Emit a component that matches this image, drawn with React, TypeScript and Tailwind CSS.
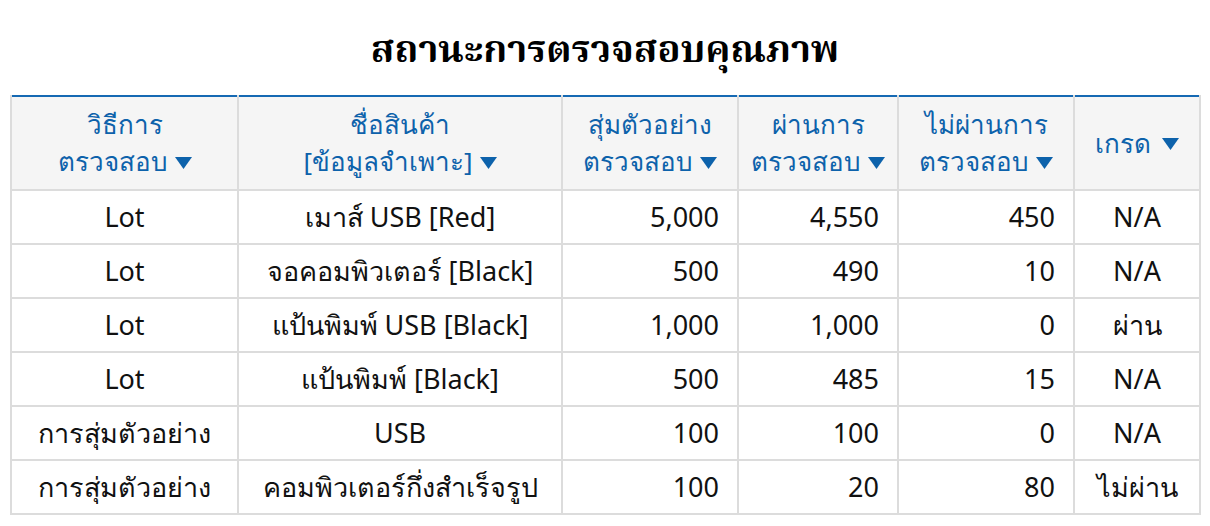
import { ReactNode } from 'react';

type Row = {
    method: string;
    product: string;
    sampled: string;
    passed: string;
    failed: string;
    grade: string;
};

const rows: Row[] = [
    { method: 'Lot', product: 'เมาส์ USB [Red]', sampled: '5,000', passed: '4,550', failed: '450', grade: 'N/A' },
    { method: 'Lot', product: 'จอคอมพิวเตอร์ [Black]', sampled: '500', passed: '490', failed: '10', grade: 'N/A' },
    { method: 'Lot', product: 'แป้นพิมพ์ USB [Black]', sampled: '1,000', passed: '1,000', failed: '0', grade: 'ผ่าน' },
    { method: 'Lot', product: 'แป้นพิมพ์ [Black]', sampled: '500', passed: '485', failed: '15', grade: 'N/A' },
    { method: 'การสุ่มตัวอย่าง', product: 'USB', sampled: '100', passed: '100', failed: '0', grade: 'N/A' },
    { method: 'การสุ่มตัวอย่าง', product: 'คอมพิวเตอร์กึ่งสำเร็จรูป', sampled: '100', passed: '20', failed: '80', grade: 'ไม่ผ่าน' },
];

// small sort arrow used in every header cell
const SortArrow = () => (
    <svg width="17" height="12" viewBox="0 0 17 12" className="inline-block ml-[7px] mb-[3px]">
        <path d="M0 0 H17 L8.5 12 Z" fill="#0d62ab" />
    </svg>
);

const HeadCell = ({ width, children }: { width: string; children: ReactNode }) => (
    <th className={`${width} border-2 border-[#dcdcdc] border-t-0 bg-[#f5f5f5] px-2 py-[9px] font-normal text-[#0d62ab] text-[26px] leading-[37px] text-center align-middle`}>
        {children}
    </th>
);

export default function App() {
    return (
        <div className="w-[1210px] h-[526px] bg-white font-['Noto_Sans',sans-serif] overflow-hidden">
            {/* Title */}
            <h1 className="text-center text-[38px] font-bold leading-[44px] pt-[30px] pb-[21px] text-black font-['Noto_Serif_Thai','Noto_Sans_Thai_Looped','Tlwg_Typist','Garuda','Liberation_Serif',serif]">
                สถานะการตรวจสอบคุณภาพ
            </h1>

            <div className="px-[10px]">
                <table className="table-fixed w-[1189px] border-collapse border-t-2 border-t-[#1569b3]">
                    <thead>
                        <tr>
                            <HeadCell width="w-[227px]">
                                วิธีการ<br />ตรวจสอบ<SortArrow />
                            </HeadCell>
                            <HeadCell width="w-[324px]">
                                ชื่อสินค้า<br />[ข้อมูลจำเพาะ]<SortArrow />
                            </HeadCell>
                            <HeadCell width="w-[176px]">
                                สุ่มตัวอย่าง<br />ตรวจสอบ<SortArrow />
                            </HeadCell>
                            <HeadCell width="w-[160px]">
                                ผ่านการ<br />ตรวจสอบ<SortArrow />
                            </HeadCell>
                            <HeadCell width="w-[176px]">
                                ไม่ผ่านการ<br />ตรวจสอบ<SortArrow />
                            </HeadCell>
                            <HeadCell width="w-[126px]">
                                เกรด<span className="inline-block w-[4px]" /><SortArrow />
                            </HeadCell>
                        </tr>
                    </thead>
                    <tbody className="text-[27px] text-[#111]">
                        {rows.map((r, i) => (
                            <tr key={i} className="h-[54px]">
                                <td className="border-2 border-[#dcdcdc] text-center px-2">{r.method}</td>
                                <td className="border-2 border-[#dcdcdc] text-center px-2">{r.product}</td>
                                <td className="border-2 border-[#dcdcdc] text-right pr-[18px]">{r.sampled}</td>
                                <td className="border-2 border-[#dcdcdc] text-right pr-[18px]">{r.passed}</td>
                                <td className="border-2 border-[#dcdcdc] text-right pr-[18px]">{r.failed}</td>
                                <td className="border-2 border-[#dcdcdc] text-center px-1">{r.grade}</td>
                            </tr>
                        ))}
                    </tbody>
                </table>
            </div>
        </div>
    );
}
